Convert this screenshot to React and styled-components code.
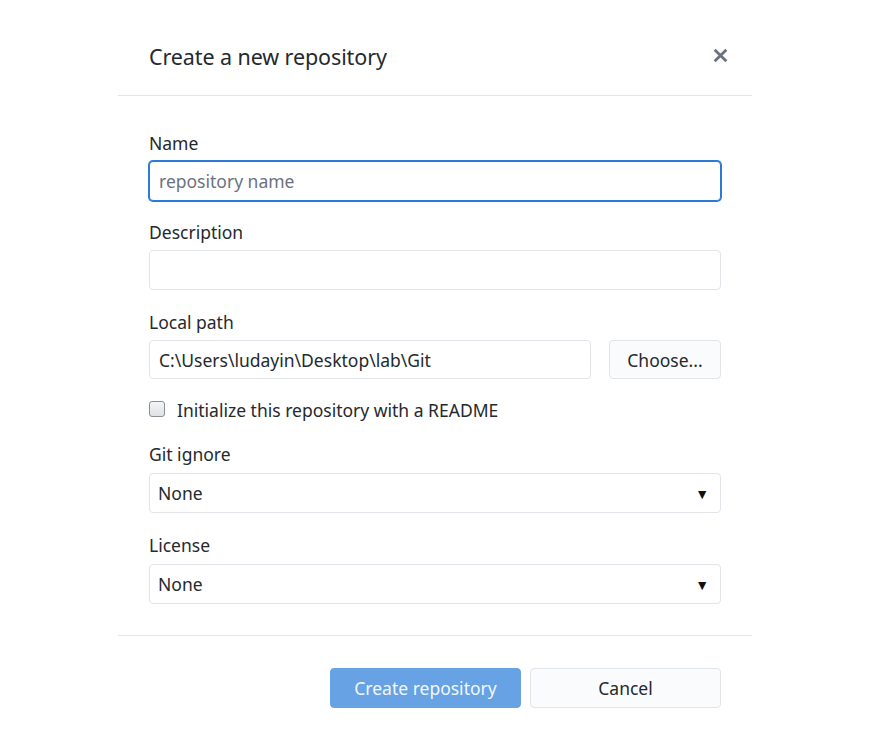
import styled, { createGlobalStyle } from 'styled-components';

const GlobalStyle = createGlobalStyle`
  body {
    margin: 0;
    background: #ffffff;
    font-family: "Noto Sans", "Open Sans", sans-serif;
    color: #24292e;
  }
`;

const Dialog = styled.div`
  width: 634px;
  margin-left: 118px;
  background: #fff;
`;

const Header = styled.div`
  height: 96px;
  box-sizing: border-box;
  padding: 17px 22px 0 31px;
  display: flex;
  align-items: center;
  justify-content: space-between;
  border-bottom: 1px solid #e4e5e7;
`;

const Title = styled.h1`
  margin: 0;
  font-size: 21.5px;
  font-weight: 400;
  letter-spacing: -0.1px;
  color: #24292e;
`;

const Close = styled.button`
  border: none;
  background: none;
  padding: 0;
  width: 20px;
  height: 20px;
  display: flex;
  align-items: center;
  justify-content: center;
  margin-top: -2px;
  cursor: pointer;
`;

const Body = styled.div`
  padding: 36px 31px 31px;
  display: flex;
  flex-direction: column;
  border-bottom: 1px solid #e4e5e7;
`;

const Label = styled.label`
  display: block;
  font-size: 17.5px;
  line-height: 22px;
  color: #24292e;
  margin-bottom: ${(p) => p.$gap || 7}px;
`;

const Field = styled.div`
  margin-bottom: ${(p) => p.$mb ?? 20}px;
`;

const Input = styled.input`
  display: block;
  width: 100%;
  box-sizing: border-box;
  height: ${(p) => p.$h || 40}px;
  padding: 0 9px;
  font-family: inherit;
  font-size: 17.5px;
  color: #24292e;
  background: #fff;
  border: 1px solid ${(p) => (p.$focused ? '#2d7ad6' : '#e1e4e8')};
  border-radius: 4px;
  outline: none;
  box-shadow: ${(p) => (p.$focused ? '0 0 0 1px #2d7ad6' : 'none')};
  &::placeholder {
    color: #6a737d;
  }
`;

const Row = styled.div`
  display: flex;
  gap: 18px;
`;

const Button = styled.button`
  height: ${(p) => p.$h || 40}px;
  box-sizing: border-box;
  font-family: inherit;
  font-size: 17.5px;
  border-radius: 4px;
  border: 1px solid ${(p) => (p.$primary ? '#67a2e4' : '#e1e4e8')};
  background: ${(p) => (p.$primary ? '#67a2e4' : '#fafbfc')};
  color: ${(p) => (p.$primary ? '#f2f7fd' : '#24292e')};
  width: ${(p) => p.$w}px;
  flex-shrink: 0;
  padding: 0;
`;

const CheckRow = styled.label`
  display: flex;
  align-items: center;
  gap: 12px;
  height: 22px;
  font-size: 17.5px;
  color: #24292e;
  margin-bottom: 22px;
`;

const Check = styled.span`
  width: 14px;
  height: 14px;
  border: 1px solid #8a8f95;
  border-radius: 3px;
  background: linear-gradient(#f4f5f6, #dfe1e4);
  margin-top: -2px;
`;

const Select = styled.div`
  height: 40px;
  box-sizing: border-box;
  border: 1px solid #e1e4e8;
  border-radius: 4px;
  display: flex;
  align-items: center;
  justify-content: space-between;
  padding: 0 11px 0 8px;
  font-size: 17.5px;
  color: #24292e;
`;

const Arrow = styled.span`
  font-size: 14px;
  color: #111;
`;

const Footer = styled.div`
  display: flex;
  justify-content: flex-end;
  gap: 9px;
  padding: 32px 31px 0;
`;

const XIcon = () => (
  <svg width="17" height="17" viewBox="0 0 16 16">
    <path d="M2.5 2.5 L13.5 13.5 M13.5 2.5 L2.5 13.5" stroke="#6a737d" strokeWidth="2.6" strokeLinecap="butt" />
  </svg>
);

const App = () => {
  return (
    <>
      <GlobalStyle />
      <Dialog>
        <Header>
          <Title>Create a new repository</Title>
          <Close aria-label="Close">
            <XIcon />
          </Close>
        </Header>
        <Body>
          <Field>
            <Label>Name</Label>
            <Input $focused placeholder="repository name" />
          </Field>
          <Field $mb={21}>
            <Label>Description</Label>
            <Input />
          </Field>
          <Field>
            <Label>Local path</Label>
            <Row>
              <Input $h={39} defaultValue="C:\Users\ludayin\Desktop\lab\Git" />
              <Button $w={112} $h={39}>Choose...</Button>
            </Row>
          </Field>
          <CheckRow>
            <Check />
            Initialize this repository with a README
          </CheckRow>
          <Field $mb={21}>
            <Label $gap={8}>Git ignore</Label>
            <Select>
              None
              <Arrow>▼</Arrow>
            </Select>
          </Field>
          <Field $mb={0}>
            <Label $gap={8}>License</Label>
            <Select>
              None
              <Arrow>▼</Arrow>
            </Select>
          </Field>
        </Body>
        <Footer>
          <Button $primary $w={191}>Create repository</Button>
          <Button $w={191}>Cancel</Button>
        </Footer>
      </Dialog>
    </>
  );
};

export default App;
